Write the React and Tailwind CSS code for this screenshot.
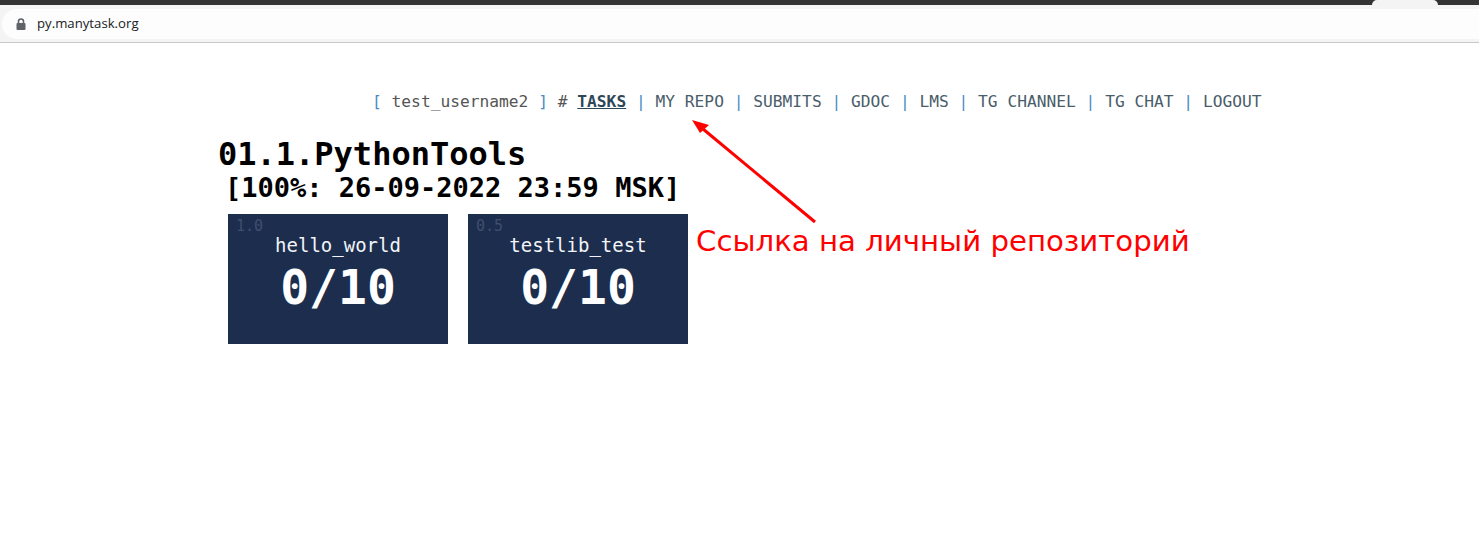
import React from "react";

const mono = { fontFamily: '"DejaVu Sans Mono", monospace' };

function Card({ score, name }) {
  return (
    <div className="w-[220px] h-[130px] bg-[#1c2d4e] flex flex-col items-center">
      <div className="self-start pl-[8px] pt-[3px] text-[15px] leading-[18px] text-[#3f4f6e]">{score}</div>
      <div className="text-[19px] leading-[22px] text-[#f2f4f8] -mt-[1px]">{name}</div>
      <div className="text-[48px] leading-[56px] font-bold text-white mt-[3px]">0/10</div>
    </div>
  );
}

export default function App() {
  const sep = <span className="text-[#4a8cc4]"> | </span>;
  const links = ["MY REPO", "SUBMITS", "GDOC", "LMS", "TG CHANNEL", "TG CHAT", "LOGOUT"];
  return (
    <div className="w-[1479px] h-[558px] bg-white overflow-hidden relative">
      {/* browser chrome */}
      <div className="h-[5px] bg-[#333333] flex">
        <div className="ml-[1372px] w-[66px] h-[5px] bg-[#f4f4f4] rounded-t-[6px]"></div>
      </div>
      <div className="h-[37px] bg-[#f4f4f4] pt-[4px] pl-[2px]">
        <div className="h-[30px] bg-[#fdfdfd] rounded-l-full flex items-center pl-[14px]">
          <svg width="10" height="12" viewBox="0 0 10 12" className="mr-[11px]">
            <path d="M2.5 5 V3.5 a2.5 2.5 0 0 1 5 0 V5" fill="none" stroke="#5f6368" strokeWidth="1.6" />
            <rect x="0.5" y="5" width="9" height="7" rx="1" fill="#5f6368" />
          </svg>
          <span className="text-[13.2px] text-[#202124]" style={{ fontFamily: '"Open Sans", "Liberation Sans", sans-serif' }}>py.manytask.org</span>
        </div>
      </div>
      <div className="h-[1px] bg-[#c8c8c8]"></div>

      {/* page */}
      <div style={mono}>
        <div className="pt-[49px] pl-[372px] text-[16.24px] leading-[20px] whitespace-pre text-[#555555]">
          <span className="text-[#4a8cc4]">[ </span>
          <span>test_username2</span>
          <span className="text-[#4a8cc4]"> ]</span>
          <span> # </span>
          <span className="font-bold underline text-[#2f4858]">TASKS</span>
          {links.map((l) => (
            <React.Fragment key={l}>
              {sep}
              <span className="text-[#4a5d6a]">{l}</span>
            </React.Fragment>
          ))}
        </div>
        <div className="pl-[218px] pt-[24px]">
          <div className="text-[32px] leading-[36px] font-bold text-black">01.1.PythonTools</div>
          <div className="text-[27px] leading-[30px] font-bold text-black pl-[7px] mt-[1px]">[100%: 26-09-2022 23:59 MSK]</div>
          <div className="flex gap-[20px] pl-[10px] mt-[11px]">
            <Card score="1.0" name="hello_world" />
            <Card score="0.5" name="testlib_test" />
          </div>
        </div>
      </div>

      {/* annotation */}
      <div className="absolute left-[696px] top-[223px] text-[29.2px] leading-[36px] text-[#ff0000] whitespace-nowrap" style={{ fontFamily: '"DejaVu Sans", sans-serif' }}>
        Ссылка на личный репозиторий
      </div>
      <svg className="absolute left-0 top-0" width="1479" height="558" style={{ pointerEvents: "none" }}>
        <line x1="815" y1="222" x2="697" y2="124" stroke="#ff0000" strokeWidth="3" />
        <polygon points="692,120 709,125 700,133" fill="#ff0000" />
      </svg>
    </div>
  );
}
